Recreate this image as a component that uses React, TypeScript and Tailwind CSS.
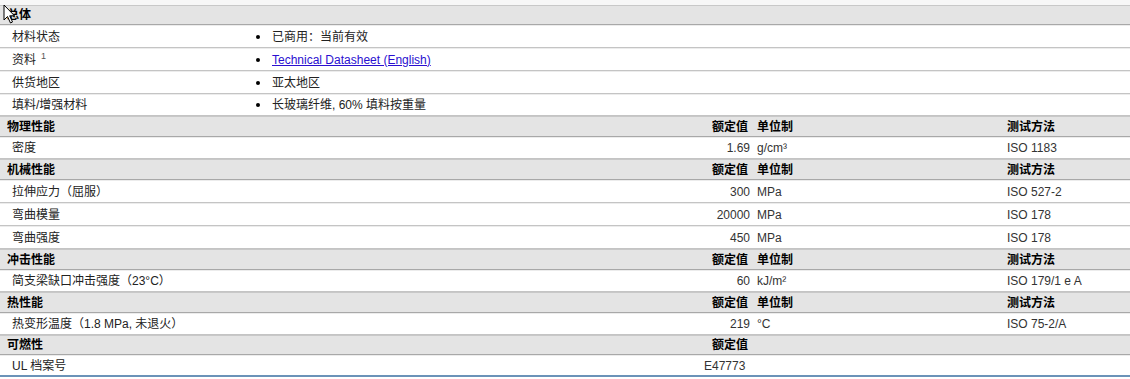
const FONT = { fontFamily: '"Liberation Sans", Arial, "Noto Sans CJK SC", sans-serif' }

type Prop = { label: string; value: string; unit?: string; test?: string; h?: string }
type Section = { title: string; unitHead?: boolean; testHead?: boolean; rows: Prop[] }

const GENERAL = [
  { label: '材料状态', value: '已商用：当前有效' },
  { label: '资料', sup: '1', value: 'Technical Datasheet (English)', link: true },
  { label: '供货地区', value: '亚太地区' },
  { label: '填料/增强材料', value: '长玻璃纤维, 60% 填料按重量', h: 'h-[22px]' },
]

const SECTIONS: Section[] = [
  { title: '物理性能', unitHead: true, testHead: true, rows: [{ label: '密度', value: '1.69', unit: 'g/cm³', test: 'ISO 1183', h: 'h-[22px]' }] },
  {
    title: '机械性能', unitHead: true, testHead: true, rows: [
      { label: '拉伸应力（屈服）', value: '300', unit: 'MPa', test: 'ISO 527-2' },
      { label: '弯曲模量', value: '20000', unit: 'MPa', test: 'ISO 178' },
      { label: '弯曲强度', value: '450', unit: 'MPa', test: 'ISO 178' },
    ],
  },
  { title: '冲击性能', unitHead: true, testHead: true, rows: [{ label: '简支梁缺口冲击强度（23°C）', value: '60', unit: 'kJ/m²', test: 'ISO 179/1 e A', h: 'h-[22px]' }] },
  { title: '热性能', unitHead: true, testHead: true, rows: [{ label: '热变形温度（1.8 MPa, 未退火）', value: '219', unit: '°C', test: 'ISO 75-2/A', h: 'h-[22px]' }] },
]

function Head({ title, unitHead, testHead, h = 'h-[21px]' }: { title: string; unitHead?: boolean; testHead?: boolean; h?: string }) {
  return (
    <div className={`flex items-center ${h} bg-[#e4e4e4] border-t border-[#c8c8c8] border-b border-b-[#a8a8a8] font-bold text-[12px] text-black`}>
      <div className="w-[700px] pl-[7px]">{title}</div>
      <div className="w-[52px] text-right pr-[4px]">{unitHead !== undefined && '额定值'}</div>
      <div className="w-[250px] pl-[5px]">{unitHead && '单位制'}</div>
      <div className="flex-1 pl-[5px]">{testHead && '测试方法'}</div>
    </div>
  )
}

function Cursor() {
  return (
    <svg className="absolute left-[3px] top-[4px]" width="13" height="20" viewBox="0 0 13 20">
      <path d="M1 1 L1 16 L4.5 12.5 L7.5 19 L9.5 18 L6.7 11.8 L11.5 11.8 Z" fill="#fff" stroke="#000" strokeWidth="1" strokeLinejoin="miter" />
    </svg>
  )
}

export default function App() {
  return (
    <div className="relative w-[1130px] h-[379px] bg-white overflow-hidden text-[12px] text-[#222]" style={FONT}>
      <div className="h-[5px] bg-[#f7f7f7]" />
      <Head title="总体" h="h-[20px]" />
      {GENERAL.map((r) => (
        <div key={r.label} className={`flex items-center ${r.h ?? 'h-[23px]'} border-t border-[#ececec] border-b border-b-[#c4c4c4]`}>
          <div className="w-[250px] pl-[12px]">
            {r.label}
            {r.sup && <sup className="ml-[5px] text-[9px] text-[#555]">{r.sup}</sup>}
          </div>
          <div className="flex items-center">
            <span className="w-[4px] h-[4px] rounded-full bg-black ml-[6px] mr-[12px]" />
            {r.link ? <a href="#" className="text-[#2a0fd0] underline">{r.value}</a> : <span>{r.value}</span>}
          </div>
        </div>
      ))}
      {SECTIONS.map((s) => (
        <div key={s.title}>
          <Head title={s.title} unitHead={s.unitHead} testHead={s.testHead} />
          {s.rows.map((r) => (
            <div key={r.label} className={`flex items-center ${r.h ?? 'h-[23px]'} border-t border-[#ececec] border-b border-b-[#c4c4c4]`}>
              <div className="w-[700px] pl-[12px]">{r.label}</div>
              <div className="w-[52px] text-right pr-[2px] text-[#333]">{r.value}</div>
              <div className="w-[250px] pl-[5px] text-[#333]">{r.unit}</div>
              <div className="flex-1 pl-[5px] text-[#333]">{r.test}</div>
            </div>
          ))}
        </div>
      ))}
      <Head title="可燃性" unitHead={false} h="h-[20px]" />
      <div className="flex items-center h-[22px] border-t border-[#ececec] border-b-2 border-b-[#6b93b8]">
        <div className="w-[700px] pl-[12px]">UL 档案号</div>
        <div className="pl-[4px] text-[#333]">E47773</div>
      </div>
      <Cursor />
    </div>
  )
}
